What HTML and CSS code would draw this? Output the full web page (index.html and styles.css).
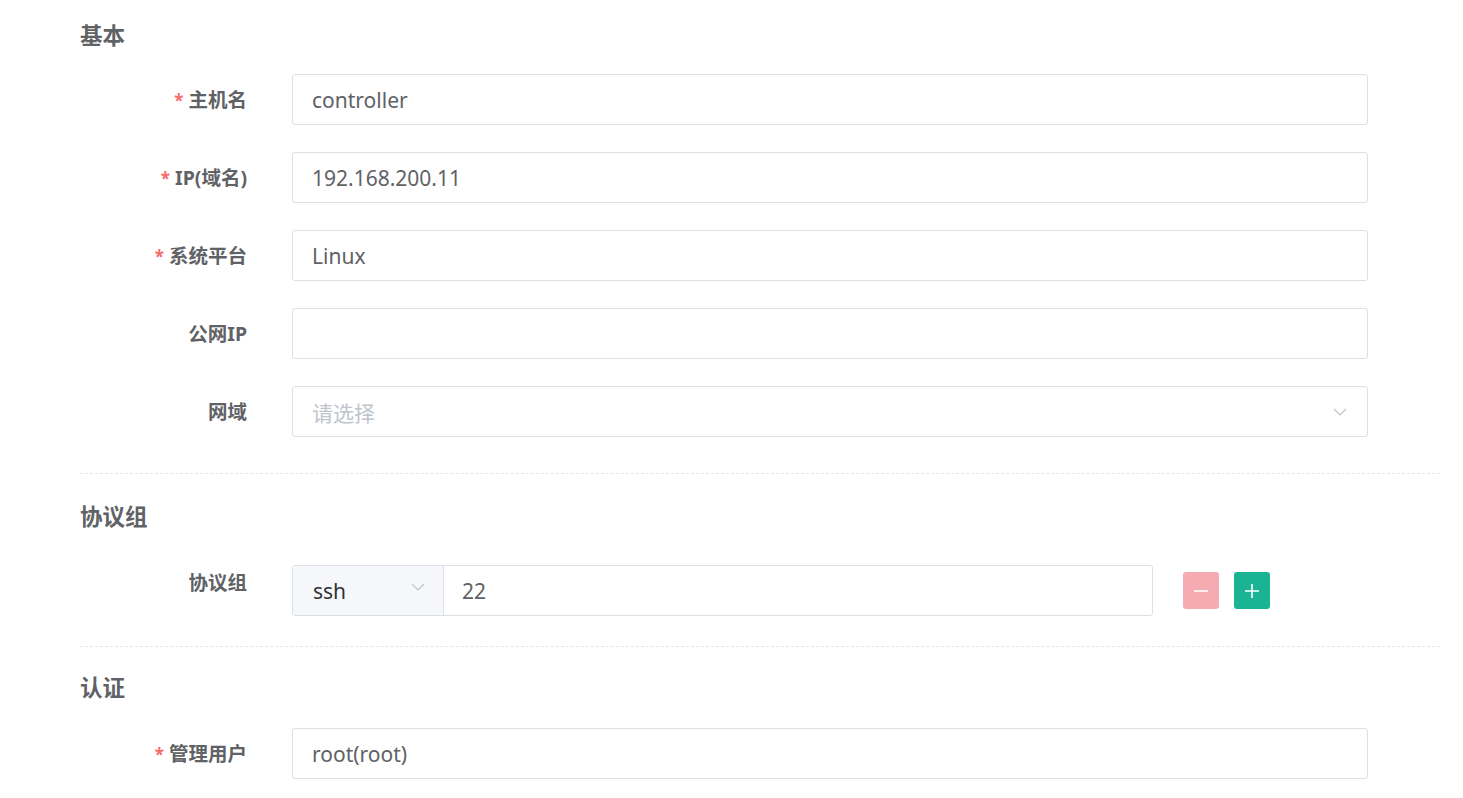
FILE: index.html
```html
<!DOCTYPE html>
<html lang="zh-CN">

<head>
    <meta charset="UTF-8">
    <meta name="viewport" content="width=device-width, initial-scale=1.0">
    <title>资产</title>

    <link rel="stylesheet" href="styles.css">
</head>

<body>
    <form class="asset_form">
        <!-- 基本 -->
        <h3 class="group_title first">基本</h3>

        <div class="form_row">
            <label class="form_label"><span class="required">*</span>主机名</label>
            <div class="form_input"><span class="value">controller</span></div>
        </div>
        <div class="form_row">
            <label class="form_label"><span class="required">*</span>IP(域名)</label>
            <div class="form_input"><span class="value">192.168.200.11</span></div>
        </div>
        <div class="form_row">
            <label class="form_label"><span class="required">*</span>系统平台</label>
            <div class="form_input"><span class="value">Linux</span></div>
        </div>
        <div class="form_row">
            <label class="form_label">公网IP</label>
            <div class="form_input"></div>
        </div>
        <div class="form_row">
            <label class="form_label">网域</label>
            <div class="form_input select">
                <span class="placeholder">请选择</span>
                <svg class="arrow" width="14" height="8" viewBox="0 0 14 8">
                    <path d="M1 1l6 6 6-6" fill="none" stroke="#c0c4cc" stroke-width="1.2"></path>
                </svg>
            </div>
        </div>

        <div class="divider"></div>

        <!-- 协议组 -->
        <h3 class="group_title">协议组</h3>

        <div class="form_row protocol_row">
            <label class="form_label top">协议组</label>
            <div class="protocol_group">
                <div class="protocol_select">
                    <span class="value">ssh</span>
                    <svg class="arrow" width="14" height="8" viewBox="0 0 14 8">
                        <path d="M1 1l6 6 6-6" fill="none" stroke="#c0c4cc" stroke-width="1.2"></path>
                    </svg>
                </div>
                <div class="protocol_port"><span class="value">22</span></div>
            </div>
            <div class="protocol_actions">
                <button type="button" class="icon_btn danger">
                    <svg width="16" height="16" viewBox="0 0 16 16">
                        <path d="M1 8h14" stroke="#fff" stroke-width="1.6"></path>
                    </svg>
                </button>
                <button type="button" class="icon_btn primary">
                    <svg width="16" height="16" viewBox="0 0 16 16">
                        <path d="M1 8h14M8 1v14" stroke="#fff" stroke-width="1.6"></path>
                    </svg>
                </button>
            </div>
        </div>

        <div class="divider second"></div>

        <!-- 认证 -->
        <h3 class="group_title third">认证</h3>

        <div class="form_row">
            <label class="form_label"><span class="required">*</span>管理用户</label>
            <div class="form_input"><span class="value">root(root)</span></div>
        </div>
    </form>
</body>

</html>
```

FILE: styles.css
```css
* {
    margin: 0;
    padding: 0;
    box-sizing: border-box;
}

body {
    background: #fff;
    font-family: "Noto Sans", "Noto Sans CJK SC", sans-serif;
    color: #606266;
}

.asset_form {
    width: 1440px;
    padding-left: 80px;
    display: flex;
    flex-direction: column;
}

.group_title {
    height: 30px;
    line-height: 30px;
    font-size: 22.5px;
    font-weight: 700;
    color: #606266;
    margin: 28px 0 33px;
}

.group_title.first {
    margin: 21px 0 23px;
}

.group_title.third {
    margin: 26px 0 25px;
}

.form_row {
    display: flex;
    align-items: center;
    gap: 45px;
    height: 51px;
    margin-bottom: 27px;
}

.form_label {
    width: 167px;
    flex-shrink: 0;
    text-align: right;
    font-size: 19.5px;
    font-weight: 700;
    color: #606266;
    line-height: 51px;
}

.form_label.top {
    align-self: flex-start;
    line-height: 36px;
}

.required {
    color: #f56c6c;
    font-size: 17px;
    margin-right: 5px;
}

.form_input {
    width: 1076px;
    height: 51px;
    border: 1px solid #dcdfe6;
    border-radius: 3px;
    display: flex;
    align-items: center;
    padding: 1px 19px 0;
    font-size: 21px;
}

.value {
    color: #606266;
}

.placeholder {
    color: #c0c4cc;
}

.select {
    justify-content: space-between;
}

.select .arrow {
    margin-right: 1px;
}

.divider {
    border-top: 1px dashed #e4e7ed;
    width: 1360px;
    margin-top: 9px;
}

.divider.second {
    margin-top: 3px;
}

.protocol_row {
    gap: 0;
}

.protocol_row .form_label {
    margin-right: 45px;
}

.protocol_group {
    display: flex;
    width: 861px;
    height: 51px;
    border: 1px solid #dcdfe6;
    border-radius: 3px;
    font-size: 21px;
}

.protocol_select {
    width: 151px;
    background: #f5f7fa;
    border-right: 1px solid #dcdfe6;
    display: flex;
    align-items: center;
    justify-content: space-between;
    padding: 0 18px 7px 20px;
    color: #303133;
}

.protocol_select .value {
    color: #303133;
    margin-bottom: -8px;
}

.protocol_port {
    flex: 1;
    display: flex;
    align-items: center;
    padding: 1px 18px 0;
}

.protocol_actions {
    display: flex;
    gap: 15px;
    margin-left: 30px;
}

.icon_btn {
    width: 36px;
    height: 37px;
    border: none;
    border-radius: 3px;
    display: flex;
    align-items: center;
    justify-content: center;
    cursor: pointer;
}

.icon_btn.danger {
    background: #f6abb2;
    cursor: not-allowed;
}

.icon_btn.primary {
    background: #1ab394;
}
```
